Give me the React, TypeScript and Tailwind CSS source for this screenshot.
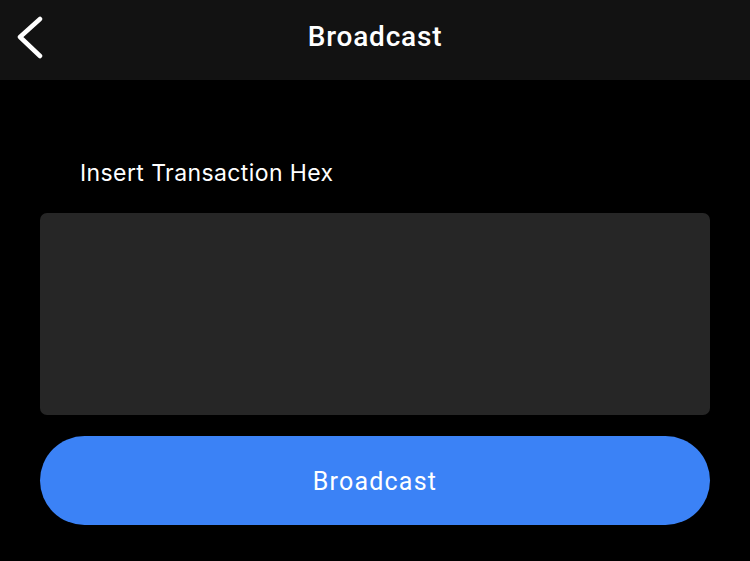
export default function App() {
  return (
    <div className="w-[750px] h-[561px] bg-black flex flex-col" style={{ fontFamily: 'Roboto, "Liberation Sans", sans-serif' }}>
      <div className="h-[80px] bg-[#121212] relative flex items-center justify-center">
        <button className="absolute left-[14px] top-[14px] w-[30px] h-[46px] flex items-center justify-center">
          <svg width="28" height="44" viewBox="0 0 28 44" fill="none">
            <path d="M25 4 L5 22 L25 41" stroke="white" strokeWidth="4.5" strokeLinecap="round" strokeLinejoin="round" />
          </svg>
        </button>
        <h1 className="text-white text-[28px] font-medium tracking-[0.8px] -mt-[6px]">Broadcast</h1>
      </div>
      <div className="px-[40px] pt-[78px] flex flex-col">
        <label className="text-white text-[23px] pl-[40px] leading-[30px] tracking-[0.4px]" style={{ fontFamily: 'Inter, "Open Sans", sans-serif' }}>Insert Transaction Hex</label>
        <textarea className="mt-[25px] h-[202px] w-full bg-[#262626] rounded-[7px] resize-none outline-none text-white p-3" />
        <button className="mt-[21px] h-[89px] w-full rounded-full bg-[#3b82f6] text-white text-[25px] font-normal tracking-[1.2px] pt-[2px]">Broadcast</button>
      </div>
    </div>
  );
}
